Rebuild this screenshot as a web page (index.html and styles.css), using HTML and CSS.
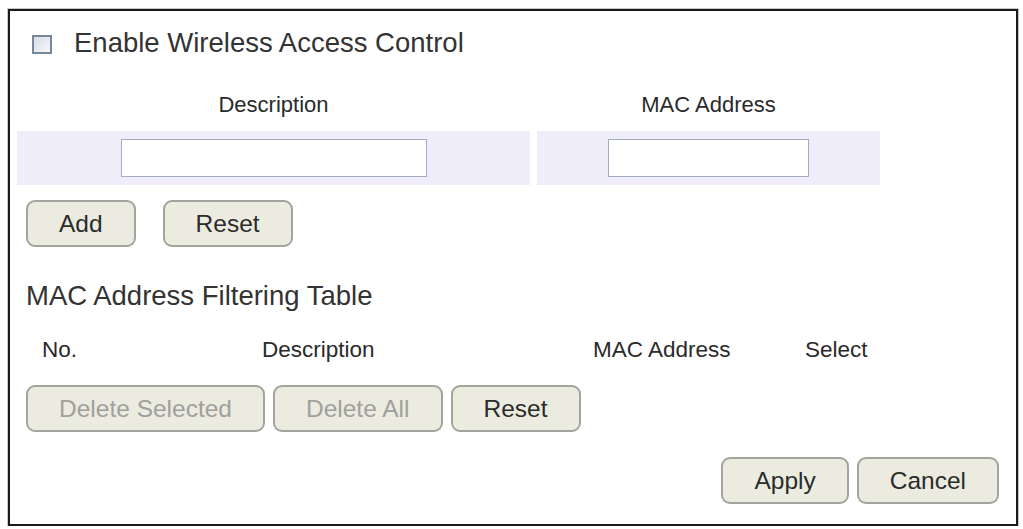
FILE: index.html
```html
<!DOCTYPE html>
<html lang="en">

<head>
  <meta charset="UTF-8">
  <meta name="viewport" content="width=device-width, initial-scale=1.0">
  <title>Wireless Access Control</title>
  <link rel="stylesheet" href="styles.css">
</head>

<body>
  <div class="frame">
    <!-- 开关 -->
    <label class="enable">
      <input type="checkbox" class="check">
      <span>Enable Wireless Access Control</span>
    </label>

    <!-- 新增一条 -->
    <table class="entry">
      <colgroup>
        <col class="col-desc">
        <col class="col-mac">
      </colgroup>
      <tr>
        <th>Description</th>
        <th>MAC Address</th>
      </tr>
      <tr>
        <td><input type="text" class="field field-desc"></td>
        <td><input type="text" class="field field-mac"></td>
      </tr>
    </table>

    <div class="btn-row btn-row-wide">
      <button class="btn">Add</button>
      <button class="btn">Reset</button>
    </div>

    <h2 class="section-title">MAC Address Filtering Table</h2>

    <div class="filter-head">
      <span>No.</span>
      <span>Description</span>
      <span>MAC Address</span>
      <span>Select</span>
    </div>

    <div class="btn-row">
      <button class="btn" disabled>Delete Selected</button>
      <button class="btn" disabled>Delete All</button>
      <button class="btn">Reset</button>
    </div>

    <div class="btn-row actions">
      <button class="btn">Apply</button>
      <button class="btn">Cancel</button>
    </div>
  </div>
</body>

</html>
```

FILE: styles.css
```css
body {
  margin: 0;
  background: #fff;
  font-family: "Liberation Sans", Arial, sans-serif;
  color: #333;
}

/* 外框 */
.frame {
  box-sizing: border-box;
  width: 1010px;
  height: 517px;
  margin: 9px 0 0 8px;
  border: 2px solid #1a1a1a;
  box-shadow: 0 0 0 1px #c8c8c8;
  padding-top: 16px;
}

/* 开关行 */
.enable {
  display: flex;
  align-items: center;
  height: 32px;
  padding-left: 23px;
  font-size: 27.5px;
  line-height: 32px;
}

.check {
  appearance: none;
  box-sizing: border-box;
  width: 20px;
  height: 19px;
  margin: 2px 22px 0 -1px;
  border: 2px solid #75879b;
  background: linear-gradient(135deg, #d5dce6, #f7f8fa);
}

/* 输入表格 */
.entry {
  table-layout: fixed;
  width: 877px;
  margin-top: 27px;
  border-spacing: 7px;
}

.col-desc {
  width: 513px;
}

.col-mac {
  width: 343px;
}

.entry th {
  height: 31px;
  padding: 0;
  vertical-align: top;
  font-size: 22px;
  font-weight: normal;
  line-height: 24px;
  color: #2a2a2a;
}

.entry td {
  padding: 8px 0;
  background: #f0edfb;
}

.field {
  display: block;
  box-sizing: border-box;
  height: 38px;
  margin: 0 auto;
  border: 1px solid #a3abc2;
  background: #fff;
}

.field-desc {
  width: 306px;
}

.field-mac {
  width: 201px;
}

/* 按钮 */
.btn-row {
  display: flex;
  gap: 8px;
  padding-left: 16px;
  margin-top: 23px;
}

.btn-row-wide {
  gap: 27px;
  margin-top: 8px;
}

.btn {
  height: 47px;
  padding: 0 31px;
  border: 2px solid #a4a49e;
  border-radius: 9px;
  background: #ecebe0;
  font-family: inherit;
  font-size: 24.5px;
  color: #2b2b2b;
}

.btn:disabled {
  color: #a0a09c;
}

.section-title {
  margin: 33px 0 0 16px;
  font-size: 27.5px;
  font-weight: normal;
  line-height: 32px;
}

.filter-head {
  display: grid;
  grid-template-columns: 220px 331px 212px auto;
  margin-top: 26px;
  padding-left: 32px;
  font-size: 22.5px;
  line-height: 24px;
  color: #2a2a2a;
}

.actions {
  justify-content: flex-end;
  padding-right: 17px;
  margin-top: 25px;
}
```
